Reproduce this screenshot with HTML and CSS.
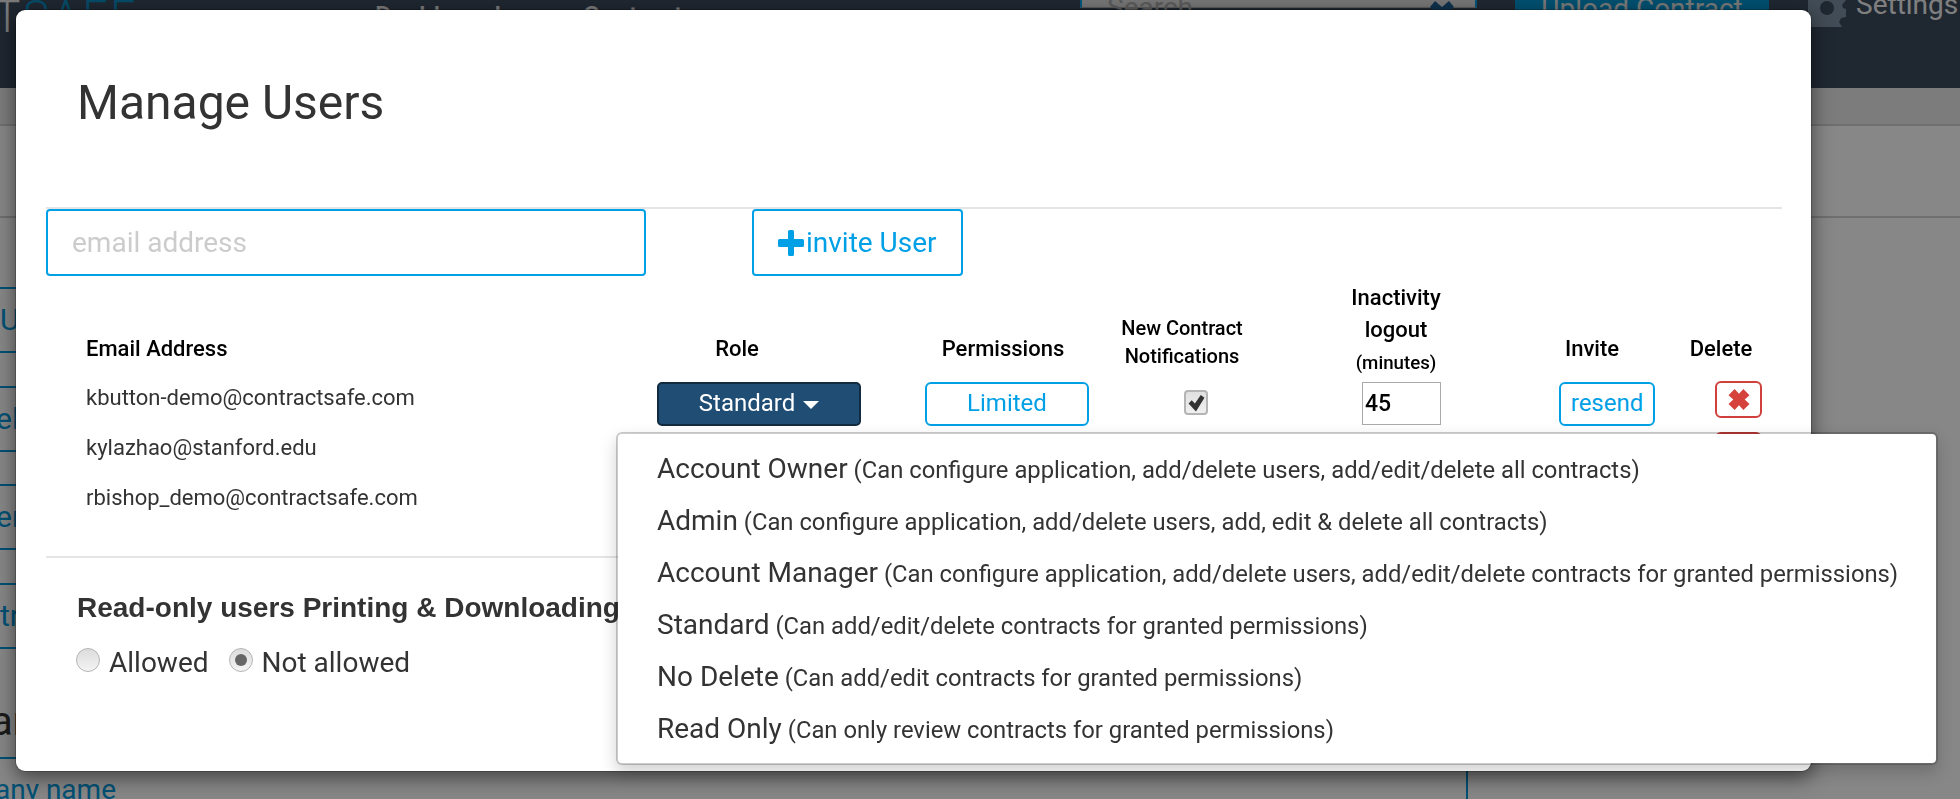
FILE: index.html
```html
<!DOCTYPE html>
<html lang="en">
<head>
<meta charset="utf-8">
<title>Manage Users</title>
<link rel="stylesheet" href="styles.css">
</head>
<body>
<div class="page">
  <header class="topbar">
    <div class="logo"><span class="logo-a">T</span><span class="logo-b">SAFE</span></div>
    <nav class="nav"><a>Dashboard</a><a>Contracts</a></nav>
    <div class="search"><span>Search</span>
      <svg class="search-x" viewBox="0 0 24 24"><path d="M5 1l7 6 7-6 5 6-6 5 6 6-5 5-7-6-7 6-5-5 6-6-6-5z"/></svg>
    </div>
    <a class="upload">Upload Contract</a>
    <div class="settings">
      <svg class="gear" viewBox="0 0 38 38"><path fill-rule="evenodd" d="M15 0h8l1 6 4 2 5-3 5 6-4 5 1 3 3 1v8l-5 1-2 4 3 5-6 5-4-3-4 2-1 5h-8l-1-5-4-2-4 3-6-5 3-5-2-4-5-1v-8l5-1 2-4-3-5 6-6 4 3 4-2zM19 12a7 7 0 1 0 .01 0z"/></svg>
      <span>Settings</span>
    </div>
  </header>
  <div class="sub-a"></div>
  <div class="sub-b"></div>
  <div class="content">
    <div class="rail">
      <div class="tab">U</div>
      <div class="tab tab-shift">el</div>
      <div class="tab tab-shift">er</div>
      <div class="tab">tr</div>
      <div class="rail-title">ar</div>
      <div class="rail-link">any name</div>
    </div>
    <div class="main"></div>
    <aside class="aside"></aside>
  </div>
</div>

<div class="backdrop"></div>

<section class="modal">
  <div class="modal-head"><h1>Manage Users</h1></div>
  <div class="modal-body">
    <div class="invite-row">
      <input class="email-input" type="text" placeholder="email address">
      <button class="invite-btn" type="button">
        <svg class="plus" viewBox="0 0 26 26"><path d="M10 1.500a1.500 1.500 0 0 1 1.500-1.500h3a1.500 1.500 0 0 1 1.500 1.500V9h8.500a1.500 1.500 0 0 1 1.500 1.500v5a1.500 1.500 0 0 1-1.500 1.500H16v7.500a1.500 1.500 0 0 1-1.500 1.500h-3a1.500 1.500 0 0 1-1.500-1.500V17H1.500A1.500 1.500 0 0 1 0 15.500v-5A1.500 1.500 0 0 1 1.500 9H10z"/></svg><span>invite User</span>
      </button>
    </div>

    <div class="grid-row head-row">
      <div class="th th-email">Email Address</div>
      <div class="th th-role">Role</div>
      <div class="th th-perm">Permissions</div>
      <div class="th th-notif">New Contract<br>Notifications</div>
      <div class="th th-idle">Inactivity<br>logout<br><small>(minutes)</small></div>
      <div class="th th-invite">Invite</div>
      <div class="th th-delete">Delete</div>
    </div>

    <div class="grid-row user-row">
      <div class="email">kbutton-demo@contractsafe.com</div>
      <div><button class="role-btn" type="button">Standard <i class="caret"></i></button></div>
      <div><button class="outline-btn perm-btn" type="button">Limited</button></div>
      <div><span class="check"><svg viewBox="0 0 16 16"><path d="M0.500 8.500l3-3 3 3 5.500-8 3.500 2.500-8 13z"/></svg></span></div>
      <div><input class="idle-input" type="text" value="45"></div>
      <div><button class="outline-btn resend-btn" type="button">resend</button></div>
      <div><button class="del-btn" type="button" aria-label="Delete"><svg viewBox="0 0 24 24"><path d="M7 0l5 5.500L17 0l7 7-5.500 5L24 17l-7 7-5-5.500L7 24l-7-7 5.500-5L0 7z"/></svg></button></div>
    </div>
    <div class="grid-row user-row">
      <div class="email">kylazhao@stanford.edu</div>
      <div></div><div></div><div></div><div></div><div></div>
      <div><button class="del-btn del-next" type="button" aria-label="Delete"></button></div>
    </div>
    <div class="grid-row user-row">
      <div class="email">rbishop_demo@contractsafe.com</div>
      <div></div><div></div><div></div><div></div><div></div>
      <div></div>
    </div>

    <div class="policy">
      <h3>Read-only users Printing &amp; Downloading</h3>
      <div class="radios">
        <label class="radio-label"><input class="radio" type="radio" name="print">Allowed</label>
        <label class="radio-label"><input class="radio" type="radio" name="print" checked>Not allowed</label>
      </div>
    </div>
  </div>

  <ul class="menu">
    <li><span class="menu-name">Account Owner</span> (Can configure application, add/delete users, add/edit/delete all contracts)</li>
    <li><span class="menu-name">Admin</span> (Can configure application, add/delete users, add, edit &amp; delete all contracts)</li>
    <li><span class="menu-name">Account Manager</span> (Can configure application, add/delete users, add/edit/delete contracts for granted permissions)</li>
    <li><span class="menu-name">Standard</span> (Can add/edit/delete contracts for granted permissions)</li>
    <li><span class="menu-name">No Delete</span> (Can add/edit contracts for granted permissions)</li>
    <li><span class="menu-name">Read Only</span> (Can only review contracts for granted permissions)</li>
  </ul>
</section>
</body>
</html>
```
FILE: styles.css
```css
* { box-sizing: border-box; }
html, body { margin: 0; height: 799px; overflow: hidden; }
body { font-family: Roboto, "Liberation Sans", sans-serif; color: #333; background: #fff; }

/* page behind the dialog */
.page { height: 799px; overflow: hidden; }
.topbar {
  height: 88px; background: #3c4b5e; display: flex; align-items: flex-start;
  overflow: hidden; position: relative;
}
.logo { font-size: 44px; font-weight: 300; letter-spacing: 3px; line-height: 44px; margin: -5px 0 0 -6px; width: 381px; white-space: nowrap; flex: none; }
.logo-a { color: #e6e6e6; }
.logo-b { color: #0a8fc4; }
.nav { display: flex; gap: 82px; font-size: 26px; font-weight: 500; color: #e8e8e8; line-height: 30px; padding-top: 1px; width: 705px; flex: none; }
.search {
  width: 397px; height: 8px; background: #dfdfdf; border: solid #00a0e6; border-width: 0 2px;
  border-bottom: 1px solid #aaa; position: relative; font-size: 28px; color: #aaa; flex: none;
}
.search span { position: absolute; left: 25px; top: -7px; line-height: 30px; }
.search-x { position: absolute; left: 348px; top: 0; width: 24px; height: 24px; fill: #1c5d8f; }
.upload {
  margin-left: 38px; width: 254px; height: 60px; background: #0097d3; color: #e6e6e6; flex: none;
  font-size: 28px; text-align: center; line-height: 30px; padding-top: 0; margin-top: -6px;
}
.settings { margin-left: 39px; display: flex; gap: 10px; color: #f0f0f0; font-size: 28px; flex: none; line-height: 30px; margin-top: -10px; }
.gear { width: 38px; height: 38px; fill: #7d90a3; flex: none; margin-top: -1px; }

.sub-a { height: 38px; background: #e8ebe9; border-bottom: 2px solid #d2d2d2; }
.sub-b { height: 92px; background: #fff; border-bottom: 2px solid #d2d2d2; }
.content { display: flex; height: 581px; }
.rail { width: 16px; padding-top: 69px; overflow: visible; flex: none; white-space: nowrap; }
.tab {
  height: 66px; margin-bottom: 32.500px; border: solid #0099dd; border-width: 2px 0;
  font-size: 30px; line-height: 62px; color: #0099dd;
}
.tab-shift { text-indent: -4px; overflow: hidden; }
.rail-title {
  font-size: 40px; line-height: 40px; color: #333; margin-top: 53.500px; text-indent: -9px; height: 57px;
  border-bottom: 2px solid #0099dd; overflow: hidden;
}
.rail-link { padding-top: 16px; font-size: 28px; line-height: 30px; color: #0099dd; text-indent: -5px; }
.main { width: 1450px; flex: none; }
.aside { flex: 1; border-left: 2px solid #0099dd; }

.backdrop { position: fixed; inset: 0; background: rgba(0, 0, 0, .47); }

/* dialog */
.modal {
  position: absolute; left: 15px; top: 9px; width: 1797px; height: 763px;
  background: #fff; border: 1px solid rgba(0, 0, 0, .2); background-clip: padding-box;
  border-radius: 10px; box-shadow: 0 6px 19px rgba(0, 0, 0, .5);
}
.modal-head { height: 197px; padding: 63px 0 0 61px; }
.modal-head h1 { margin: 0; font-size: 48px; font-weight: 400; line-height: 60px; color: #333; }
.modal-body { margin: 0 29px 0 30px; }

.invite-row { display: flex; border-top: 2px solid #e5e5e5; gap: 106px; }
.email-input {
  width: 600px; height: 67px; border: 2px solid #00a0e6; border-radius: 4px;
  font: 28px Roboto, sans-serif; padding: 0 24px; color: #333; outline: 0;
}
.email-input::placeholder { color: #ccc; opacity: 1; }
.invite-btn {
  width: 211px; height: 67px; border: 2px solid #00a0e6; border-radius: 4px; background: #fff;
  color: #00a0e6; font: 28px Roboto, sans-serif; display: flex; align-items: center; padding: 0 0 0 24px; gap: 2px;
}
.plus { width: 26px; height: 26px; fill: #00a0e6; flex: none; }

.grid-row { display: grid; grid-template-columns: 611px 268px 195px 220px 219px 121px 102px; }
.head-row { padding-top: 6px; align-items: end; height: 102px; margin-bottom: 3px; }
.user-row { height: 50px; }

.th { color: #000; font-size: 22px; font-weight: 500; line-height: 32px; text-align: center; }
.th small { font-size: 18.700px; }
.th-email { text-align: left; padding: 0 0 14px 40px; }
.th-role { width: 160px; padding-bottom: 14px; }
.th-perm { width: 156px; padding-bottom: 14px; }
.th-notif { width: 124px; font-size: 20px; line-height: 28px; padding-bottom: 9px; }
.th-idle { width: 112px; }
.th-invite { width: 66px; padding-bottom: 14px; }
.th-delete { width: 82px; padding-bottom: 14px; }

.email { padding-left: 40px; font-size: 22px; line-height: 34px; color: #333; }
.role-btn {
  width: 204px; height: 44px; margin-top: 1px; background: #204d74; border: 2px solid #122b40; border-radius: 5px;
  color: #fff; font: 24px Roboto, sans-serif; padding: 0 0 2px;
}
.caret { display: inline-block; vertical-align: middle; border: solid transparent; border-width: 8px 8px 0; border-top-color: #fff; margin-left: 2px; }
.outline-btn {
  height: 44px; margin-top: 1px; background: #fff; border: 2px solid #00a0e6; border-radius: 6px;
  color: #00a0e6; font: 24px Roboto, sans-serif; padding: 0 0 2px;
}
.perm-btn { width: 164px; }
.resend-btn { width: 96px; }
.check {
  display: flex; width: 24px; height: 25px; margin: 9px 0 0 64px; border: 2px solid #b5b5b5; border-radius: 4px;
  background: linear-gradient(#e0e0e0, #f0f0f0); align-items: center; justify-content: center;
}
.check svg { width: 17px; height: 18px; fill: #333; flex: none; }
.idle-input {
  width: 79px; height: 43px; margin: 1px 0 0 22px; border: 1px solid #aaa; padding: 0 2px;
  font: 500 23px Roboto, sans-serif; color: #000; border-radius: 0; outline: 0;
}
.del-btn {
  display: flex; align-items: center; justify-content: center; width: 47px; height: 37px; margin-left: 35px;
  background: #fff; border: 2px solid #d0403c; border-radius: 6px; padding: 0;
}
.del-btn svg { width: 22px; height: 21px; fill: #d6423c; }
.del-next { margin-top: 1px; }

.policy { margin-top: 25px; border-top: 2px solid #e5e5e5; padding: 32px 0 0 31px; }
.policy h3 { margin: 0; font: 700 28px/36px "Liberation Sans", Arial, sans-serif; color: #333; }
.radios { display: flex; gap: 21px; margin-top: 22px; }
.radio-label { display: flex; align-items: center; gap: 9px; font-size: 28px; line-height: 30px; color: #333; }
.radio {
  appearance: none; width: 24px; height: 24px; margin: -6px 0 0 -1px; border: 1px solid #b5b5b5; border-radius: 50%;
  background: linear-gradient(#dcdcdc, #f4f4f4); display: flex; align-items: center; justify-content: center;
}
.radio:checked::before { content: ""; width: 12px; height: 12px; border-radius: 50%; background: #666; }

/* role dropdown, opened over the table */
.menu {
  position: absolute; left: 600px; top: 422px; width: 1322px; height: 333px; margin: 0; list-style: none;
  padding: 9px 0 0 39px; background: #fff; border: 2px solid rgba(0, 0, 0, .2); background-clip: padding-box;
  border-radius: 6px; box-shadow: 0 7px 16px rgba(0, 0, 0, .18); font-size: 23.800px; color: #333;
}
.menu li { height: 52px; line-height: 52px; white-space: nowrap; }
.menu-name { font-size: 28px; }
```
